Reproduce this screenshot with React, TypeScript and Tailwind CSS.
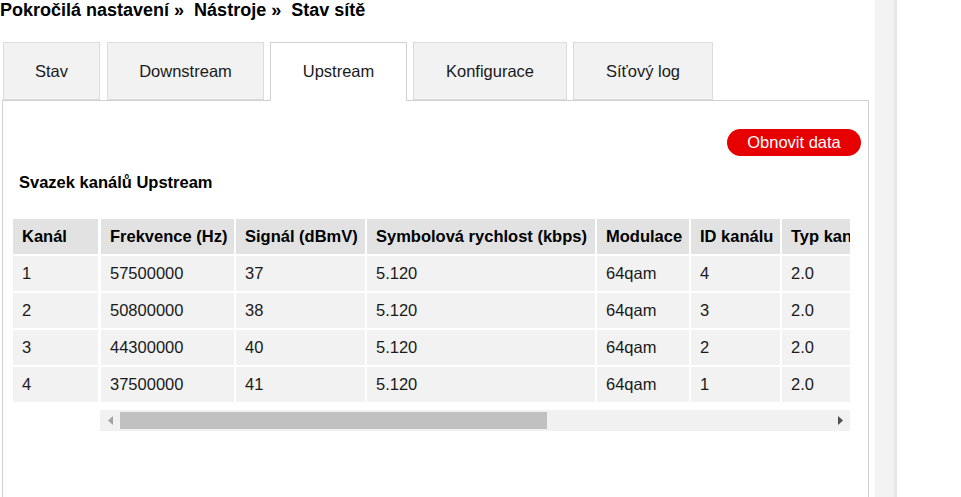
import React from "react";

const rows = [
  ["1", "57500000", "37", "5.120", "64qam", "4", "2.0"],
  ["2", "50800000", "38", "5.120", "64qam", "3", "2.0"],
  ["3", "44300000", "40", "5.120", "64qam", "2", "2.0"],
  ["4", "37500000", "41", "5.120", "64qam", "1", "2.0"],
];

const headers = [
  "Frekvence (Hz)",
  "Signál (dBmV)",
  "Symbolová rychlost (kbps)",
  "Modulace",
  "ID kanálu",
  "Typ kanálu",
];

const tabs = [
  { label: "Stav", cls: "ml-[3px] w-[97px]" },
  { label: "Downstream", cls: "ml-[7px] w-[157px]" },
  { label: "Upstream", cls: "ml-[6px] w-[137px]", active: true },
  { label: "Konfigurace", cls: "ml-[6px] w-[154px]" },
  { label: "Síťový log", cls: "ml-[6px] w-[140px]" },
];

export default function App() {
  return (
    <div className="w-[961px] h-[497px] overflow-hidden bg-white flex font-['Liberation_Sans',Arial,sans-serif] text-[16.5px] text-[#1a1a1a]">
      <div className="w-[869px] flex flex-col shrink-0">
        <div className="h-[21px] leading-[21px] text-[18px] font-bold text-black whitespace-nowrap">
          Pokročilá nastavení »{"\u00a0"} Nástroje »{"\u00a0"} Stav sítě
        </div>

        <div className="mt-[21px] h-[58px] flex items-start shrink-0">
          {tabs.map((t) =>
            t.active ? (
              <div
                key={t.label}
                className={`${t.cls} relative z-10 h-[59px] pb-[1px] bg-white border border-b-0 border-[#d2d2d2] flex items-center justify-center whitespace-nowrap`}
              >
                {t.label}
              </div>
            ) : (
              <div
                key={t.label}
                className={`${t.cls} h-[58px] bg-[#f2f2f2] border border-[#dcdcdc] flex items-center justify-center whitespace-nowrap`}
              >
                {t.label}
              </div>
            )
          )}
        </div>

        <div className="ml-[2px] w-[867px] h-[600px] shrink-0 border border-[#d0d0d0] flex flex-col">
          <div className="mt-[28px] flex justify-end pr-[7px]">
            <button className="w-[134px] h-[27px] rounded-full bg-[#e60000] text-white leading-[27px] text-center">
              Obnovit data
            </button>
          </div>

          <div className="mt-[17px] pl-[16px] h-[19px] leading-[19px] font-bold text-black">
            Svazek kanálů Upstream
          </div>

          <div className="mt-[27px] pl-[10px] flex items-start">
            <div className="w-[85px] flex flex-col gap-[2px] shrink-0">
              <div className="h-[35px] bg-[#e2e2e2] font-bold text-black pl-[9px] flex items-center">
                Kanál
              </div>
              {rows.map((r) => (
                <div key={r[0]} className="h-[35px] bg-[#f2f2f2] pl-[9px] flex items-center">
                  {r[0]}
                </div>
              ))}
            </div>

            <div className="ml-[2px] w-[750px] flex flex-col shrink-0">
              <div className="w-[750px] overflow-hidden pl-[1px]">
                <div className="w-max grid grid-cols-[133px_129px_228px_92px_89px_140px] gap-[2px]">
                  {headers.map((h) => (
                    <div
                      key={h}
                      className="h-[35px] bg-[#e2e2e2] font-bold text-black pl-[9px] flex items-center whitespace-nowrap"
                    >
                      {h}
                    </div>
                  ))}
                  {rows.map((r) =>
                    r.slice(1).map((c, i) => (
                      <div
                        key={r[0] + "-" + i}
                        className="h-[35px] bg-[#f2f2f2] pl-[9px] flex items-center whitespace-nowrap"
                      >
                        {c}
                      </div>
                    ))
                  )}
                </div>
              </div>

              <div className="mt-[8px] h-[21px] w-[750px] bg-[#f1f1f1] flex items-center">
                <div className="w-[20px] h-full flex items-center justify-center">
                  <svg width="5" height="9" viewBox="0 0 5 9">
                    <polygon points="5,0 0,4.5 5,9" fill="#a3a3a3" />
                  </svg>
                </div>
                <div className="w-[427px] h-[17px] bg-[#c1c1c1]" />
                <div className="flex-1" />
                <div className="w-[20px] h-full flex items-center justify-center">
                  <svg width="5" height="9" viewBox="0 0 5 9">
                    <polygon points="0,0 5,4.5 0,9" fill="#505050" />
                  </svg>
                </div>
              </div>
            </div>
          </div>
        </div>
      </div>

      <div className="ml-[6px] w-[22px] h-full bg-[#f3f3f3] border-r-[3px] border-[#e7e7e7] shrink-0" />
    </div>
  );
}
